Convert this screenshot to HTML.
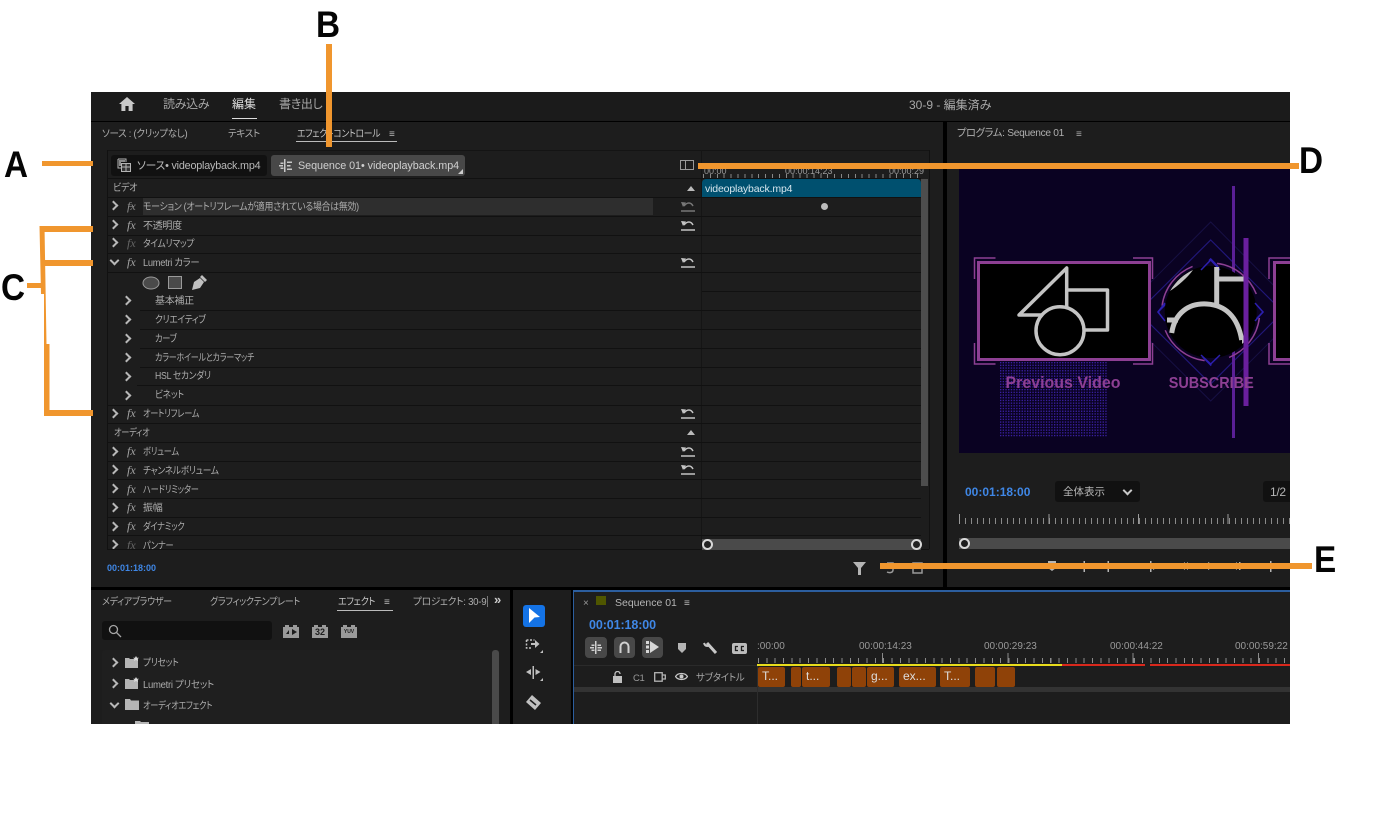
<!DOCTYPE html>
<html lang="ja"><head><meta charset="utf-8"><title>Premiere Pro</title>
<style>
html,body{margin:0;padding:0;background:#fff}
body{position:relative;width:1380px;height:815px;overflow:hidden;font-family:"Liberation Sans","Noto Sans CJK JP",sans-serif;font-feature-settings:"palt"}
div,span,svg{position:absolute}
#app{left:91px;top:92px;width:1199px;height:632px;background:#000;overflow:hidden}
#in{left:-91px;top:-92px;width:1380px;height:815px}
.p{background:#1d1d1d}
.t{white-space:nowrap;font-size:10px;line-height:18px;color:#adadad;letter-spacing:-.3px;transform-origin:0 50%;margin-top:2px}
.s8{transform:scaleX(.82)}
.s85{transform:scaleX(.87)}
.s9{transform:scaleX(.9)}
.s95{transform:scaleX(.95)}
.h{font-size:12px;color:#a8a8a8;line-height:16px;white-space:nowrap}
.l{background:#111;height:1px}
.c{width:5px;height:5px;border-right:2px solid #b8b8b8;border-top:2px solid #b8b8b8;transform:rotate(45deg)}
.d{transform:rotate(135deg)}
.fx{font:italic 12px/14px "Liberation Serif",serif;color:#a5a5a5;white-space:nowrap}
.o{background:#f0962e}
.L{font:bold 37px/40px "Liberation Sans",sans-serif;color:#050505;transform:scaleX(.9);transform-origin:0 50%}
.b{color:#3f87e6;font-weight:bold;white-space:nowrap}
.clip{top:667px;height:20px;background:#8f4208;border-radius:2px;color:#ddd;font-size:12px;line-height:19px;text-indent:4px;overflow:hidden;white-space:nowrap}
.m{font-size:10px;color:#9a9a9a;white-space:nowrap;line-height:12px}
.u{fill:none;stroke-width:1.500}
</style></head><body>
<div id="app"><div id="in">
<!-- header -->
<div class="p" style="left:91px;top:92px;width:1199px;height:29px;background:#1b1b1b"></div>
<svg style="left:119px;top:97px" width="16" height="14" viewBox="0 0 16 14"><path d="M8 0 0 7h2.400v7h4V9h3.200v5h4V7H16z" fill="#c8c8c8"/></svg>
<div class="h" style="left:163px;top:96px;letter-spacing:-.3px">読み込み</div>
<div class="h" style="left:232px;top:96px;color:#ddd">編集</div>
<div style="left:232px;top:118px;width:25px;height:1px;background:#ddd"></div>
<div class="h" style="left:279px;top:96px;letter-spacing:-.3px">書き出し</div>
<div class="h" style="left:909px;top:97px;font-size:12px">30-9 - 編集済み</div>

<!-- effect controls panel -->
<div class="p" style="left:91px;top:122px;width:852px;height:465px"></div>
<div class="t s95" style="left:102px;top:124px">ソース : (クリップなし)</div>
<div class="t s95" style="left:228px;top:124px">テキスト</div>
<div class="t" style="left:297px;top:124px;color:#c4c4c4;transform:scaleX(.88)">エフェクトコントロール</div>
<div class="t" style="left:389px;top:124px;color:#bbb">≡</div>
<div style="left:296px;top:141px;width:101px;height:1px;background:#bbb"></div>
<div style="left:107px;top:150px;width:822px;height:1px;background:#141414"></div>
<div style="left:107px;top:150px;width:1px;height:399px;background:#111"></div>
<div style="left:929px;top:150px;width:1px;height:399px;background:#111"></div>
<div style="left:107px;top:549px;width:822px;height:1px;background:#111"></div>
<div style="left:701px;top:150px;width:1px;height:399px;background:#151515"></div>

<div style="left:111px;top:155px;width:156px;height:21px;background:#111;border-radius:3px"></div>
<div style="left:271px;top:155px;width:194px;height:21px;background:#484848;border-radius:3px"></div>
<svg style="left:117px;top:158px" width="15" height="15" viewBox="0 0 15 15" fill="none" stroke="#b5b5b5"><path d="M1 1h8v3M1 1v9h3"/><rect x="4.500" y="5.500" width="9" height="8" fill="#333"/><path d="M4.500 9h9M9 5.500v8"/><path d="M2 3h6M2 5h2M2 7h2" stroke-width="1.500"/></svg>
<div class="t" style="left:137px;top:157px;margin-top:0;font-size:11px;color:#b8b8b8;letter-spacing:-.2px;transform:scaleX(.98)">ソース• videoplayback.mp4</div>
<svg style="left:279px;top:159px" width="13" height="13" viewBox="0 0 13 13" fill="#c8c8c8"><path d="M5 0h1.500v13H5zM0 6h4v1.500H0zM1.500 3.500h3V5h-3zM1.500 8.500h3V10h-3zM8 2.500h5V4H8zM8 6h3.500v1.500H8zM8 9.500h5V11H8z"/></svg>
<div class="t" style="left:298px;top:157px;margin-top:0;font-size:11px;color:#d0d0d0;letter-spacing:-.05px;transform:scaleX(.98)">Sequence 01• videoplayback.mp4</div>
<svg style="left:458px;top:169px" width="5" height="5"><path d="M5 0v5H0z" fill="#ccc"/></svg>
<svg style="left:680px;top:160px" width="14" height="10" fill="none" stroke="#9a9a9a"><rect x=".5" y=".5" width="13" height="9"/><path d="M5.500 0v10"/></svg>

<!-- row separators left -->
<div class="l" style="left:107px;top:178px;width:814px"></div>
<div class="l" style="left:107px;top:197px;width:814px"></div>
<div class="l" style="left:107px;top:216px;width:814px"></div>
<div class="l" style="left:107px;top:235px;width:814px"></div>
<div class="l" style="left:107px;top:253px;width:814px"></div>
<div class="l" style="left:107px;top:272px;width:814px"></div>
<div class="l" style="left:702px;top:291px;width:219px"></div>
<div class="l" style="left:140px;top:310px;width:781px"></div>
<div class="l" style="left:140px;top:329px;width:781px"></div>
<div class="l" style="left:140px;top:348px;width:781px"></div>
<div class="l" style="left:140px;top:367px;width:781px"></div>
<div class="l" style="left:137px;top:385px;width:784px"></div>
<div class="l" style="left:107px;top:405px;width:814px"></div>
<div class="l" style="left:107px;top:423px;width:814px"></div>
<div class="l" style="left:107px;top:442px;width:814px"></div>
<div class="l" style="left:107px;top:461px;width:814px"></div>
<div class="l" style="left:107px;top:479px;width:814px"></div>
<div class="l" style="left:107px;top:498px;width:814px"></div>
<div class="l" style="left:107px;top:517px;width:814px"></div>
<div class="l" style="left:107px;top:535px;width:814px"></div>

<div style="left:143px;top:198px;width:510px;height:17px;background:#2e2e2e"></div>

<div class="t s9" style="left:113px;top:178px">ビデオ</div>
<svg style="left:687px;top:186px" width="8" height="5"><path d="M4 0 8 5H0z" fill="#bbb"/></svg>

<div class="c" style="left:110px;top:202px"></div><div class="fx" style="left:127px;top:199px;color:#8a8a8a">f̶x</div><div class="t" style="left:143px;top:197px;transform:scaleX(.89)">モーション (オートリフレームが適用されている場合は無効)</div>
<div class="c" style="left:110px;top:221px"></div><div class="fx" style="left:127px;top:218px">fx</div><div class="t" style="left:143px;top:216px">不透明度</div>
<div class="c" style="left:110px;top:239px"></div><div class="fx" style="left:127px;top:236px;color:#666">fx</div><div class="t s85" style="left:143px;top:234px">タイムリマップ</div>
<div class="c d" style="left:111px;top:257px"></div><div class="fx" style="left:127px;top:255px">fx</div><div class="t" style="left:143px;top:253px;transform:scaleX(.93)">Lumetri カラー</div>

<svg style="left:142px;top:275px" width="66" height="16" viewBox="0 0 66 16"><ellipse cx="9" cy="8" rx="8" ry="6" fill="#4a4a4a" stroke="#9a9a9a"/><rect x="26.500" y="1.500" width="13" height="12" fill="#4a4a4a" stroke="#9a9a9a"/><path d="M50 15l2-8 6-4 4 4-4 6zM58 2l2-2 5 5-2 2z" fill="#c0c0c0"/></svg>

<div class="c" style="left:123px;top:297px"></div><div class="t" style="left:155px;top:291px">基本補正</div>
<div class="c" style="left:123px;top:316px"></div><div class="t s85" style="left:155px;top:310px">クリエイティブ</div>
<div class="c" style="left:123px;top:335px"></div><div class="t s8" style="left:155px;top:329px">カーブ</div>
<div class="c" style="left:123px;top:354px"></div><div class="t" style="left:155px;top:348px;transform:scaleX(.8)">カラーホイールとカラーマッチ</div>
<div class="c" style="left:123px;top:373px"></div><div class="t s85" style="left:155px;top:366px">HSL セカンダリ</div>
<div class="c" style="left:123px;top:392px"></div><div class="t s85" style="left:155px;top:385px">ビネット</div>
<div class="c" style="left:110px;top:410px"></div><div class="fx" style="left:127px;top:406px">fx</div><div class="t s8" style="left:143px;top:404px">オートリフレーム</div>
<div class="t s8" style="left:114px;top:423px">オーディオ</div>
<svg style="left:687px;top:430px" width="8" height="5"><path d="M4 0 8 5H0z" fill="#bbb"/></svg>
<div class="c" style="left:110px;top:448px"></div><div class="fx" style="left:127px;top:444px">fx</div><div class="t s8" style="left:143px;top:442px">ボリューム</div>
<div class="c" style="left:110px;top:466px"></div><div class="fx" style="left:127px;top:463px">fx</div><div class="t s85" style="left:143px;top:461px">チャンネルボリューム</div>
<div class="c" style="left:110px;top:485px"></div><div class="fx" style="left:127px;top:482px">fx</div><div class="t s8" style="left:143px;top:480px">ハードリミッター</div>
<div class="c" style="left:110px;top:504px"></div><div class="fx" style="left:127px;top:500px">fx</div><div class="t" style="left:143px;top:498px">振幅</div>
<div class="c" style="left:110px;top:523px"></div><div class="fx" style="left:127px;top:519px">fx</div><div class="t s8" style="left:143px;top:517px">ダイナミック</div>
<div class="c" style="left:110px;top:541px"></div><div class="fx" style="left:127px;top:538px;color:#666">fx</div><div class="t s8" style="left:143px;top:536px">パンナー</div>
<div style="left:107px;top:550px;width:594px;height:36px;background:#1d1d1d"></div>
<div style="left:107px;top:549px;width:822px;height:1px;background:#111"></div>

<!-- undo icons -->
<svg style="left:681px;top:200px" width="14" height="12" stroke="#777"><path class="u" d="M3 6c3-4 7-4 9 0"/><path d="M0 2l5 .5L2 7z" fill="#777" stroke="none"/><path class="u" d="M0 11h14"/></svg>
<svg style="left:681px;top:219px" width="14" height="12" stroke="#c4c4c4"><path class="u" d="M3 6c3-4 7-4 9 0"/><path d="M0 2l5 .5L2 7z" fill="#c4c4c4" stroke="none"/><path class="u" d="M0 11h14"/></svg>
<svg style="left:681px;top:256px" width="14" height="12" stroke="#c4c4c4"><path class="u" d="M3 6c3-4 7-4 9 0"/><path d="M0 2l5 .5L2 7z" fill="#c4c4c4" stroke="none"/><path class="u" d="M0 11h14"/></svg>
<svg style="left:681px;top:407px" width="14" height="12" stroke="#c4c4c4"><path class="u" d="M3 6c3-4 7-4 9 0"/><path d="M0 2l5 .5L2 7z" fill="#c4c4c4" stroke="none"/><path class="u" d="M0 11h14"/></svg>
<svg style="left:681px;top:445px" width="14" height="12" stroke="#c4c4c4"><path class="u" d="M3 6c3-4 7-4 9 0"/><path d="M0 2l5 .5L2 7z" fill="#c4c4c4" stroke="none"/><path class="u" d="M0 11h14"/></svg>
<svg style="left:681px;top:463px" width="14" height="12" stroke="#c4c4c4"><path class="u" d="M3 6c3-4 7-4 9 0"/><path d="M0 2l5 .5L2 7z" fill="#c4c4c4" stroke="none"/><path class="u" d="M0 11h14"/></svg>

<!-- mini timeline -->
<div class="m" style="left:704px;top:165px;font-size:9px">00:00</div>
<div class="m" style="left:785px;top:165px;font-size:9px">00:00:14:23</div>
<div class="m" style="left:889px;top:165px;font-size:9px">00:00:29</div>
<div style="left:703px;top:174px;width:218px;height:4px;background:repeating-linear-gradient(90deg,#888 0 1px,transparent 1px 6.900px)"></div>
<div style="left:702px;top:179px;width:219px;height:18px;background:#00506f;border-radius:4px 4px 0 0"></div>
<div class="t" style="left:705px;top:180px;margin-top:0;font-size:10.500px;color:#d6e6ee;letter-spacing:-.15px">videoplayback.mp4</div>
<div style="left:821px;top:203px;width:7px;height:7px;border-radius:50%;background:#bcbcbc"></div>
<div style="left:921px;top:179px;width:7px;height:307px;background:#4d4d4d"></div>
<div style="left:702px;top:539px;width:219px;height:11px;background:#4a4a4a"></div>
<div style="left:702px;top:539px;width:7px;height:7px;border-radius:50%;border:2px solid #d8d8d8;background:#222"></div>
<div style="left:911px;top:539px;width:7px;height:7px;border-radius:50%;border:2px solid #d8d8d8;background:#222"></div>
<div class="b" style="left:107px;top:562px;font-size:9px;line-height:12px">00:01:18:00</div>
<svg style="left:853px;top:562px" width="13" height="13"><path d="M0 0h13L8 6v7H5V6z" fill="#b5b5b5"/></svg>
<svg style="left:880px;top:560px" width="46" height="15" fill="none" stroke="#9a9a9a" stroke-width="1.500"><path d="M7 3h6v7c0 3-4 3-6 2"/><rect x="33" y="3" width="9" height="10"/></svg>

<!-- program panel -->
<div class="p" style="left:947px;top:122px;width:343px;height:465px"></div>
<div class="t" style="left:957px;top:123px;margin-top:1px;color:#b0b0b0;font-size:10.500px;transform:scaleX(.97)">プログラム: Sequence 01</div>
<div class="t" style="left:1076px;top:124px">≡</div>
<svg style="left:959px;top:163px" width="331" height="290" viewBox="959 163 331 290">
<defs><pattern id="dots" x="1000" y="362" width="2.700" height="2.700" patternUnits="userSpaceOnUse"><rect width="1.300" height="1.300" fill="#3b20a8"/></pattern></defs>
<rect x="959" y="163" width="331" height="290" fill="#0a0222"/>
<rect x="1000" y="362" width="107" height="75" fill="url(#dots)"/>
<g fill="none">
<path d="M1210.700 222 1300 312 1210.700 401 1121 312z" stroke="#171044" stroke-width="1"/>
<path d="M1210.700 240 1283 312 1210.700 384 1138 312z" stroke="#211778" stroke-width="1.200"/>
<path d="M1210.700 259 1263 312 1210.700 365 1158 312z" stroke="#2c1fb0" stroke-width="1.500" stroke-dasharray="14 60"/>
</g>
<rect x="1232" y="186" width="3" height="87" fill="#5a1f96"/>
<rect x="1232" y="350" width="3" height="88" fill="#5a1f96"/>
<rect x="978.500" y="262.500" width="171" height="97" fill="#000" stroke="#8d3f93" stroke-width="3"/>
<path d="M974.500 279v-21h21M1133 258h19.500v21M974.500 343v21h21M1133 364h19.500v-21" fill="none" stroke="#8d3f93" stroke-width="1.500"/>
<g fill="none" stroke="#c4c4c4" stroke-width="3.500" stroke-linejoin="round">
<path d="M1066.700 268v47h-47.700z"/>
<path d="M1068 290h39.500v40h-24.500"/>
<circle cx="1060" cy="330.700" r="24" fill="#000"/>
</g>
<circle cx="1210.700" cy="312" r="46" fill="#000"/>
<circle cx="1210.700" cy="312" r="49" fill="none" stroke="#8d3f93" stroke-width="1.500" stroke-dasharray="52 25" stroke-dashoffset="-6"/>
<path d="M1210.700 260 1220 270M1210.700 260 1201 270M1263 312 1255 303M1263 312 1255 321M1158 312 1165 303M1158 312 1165 321M1210.700 364 1201 355M1210.700 364 1220 355" stroke="#2c1fb0" stroke-width="1.500" fill="none"/>
<g fill="none" stroke="#c4c4c4" stroke-width="5">
<path d="M1216.700 267v38M1216.700 279h28"/>
<path d="M1171.700 333c3-20 17-30 35-29s31 12 35 36"/>
<path d="M1167 320h11"/>
</g>
<path d="M1170 291c6-10 14-17 23-21-6 8-14 15-23 21z" fill="#c4c4c4"/>
<path d="M1242 337l6 1-6 6z" fill="#c4c4c4"/>
<rect x="1243.500" y="238" width="5" height="168" fill="#6a1f9e"/>
<rect x="1274.500" y="262.500" width="20" height="97" fill="#000" stroke="#8d3f93" stroke-width="3"/>
<path d="M1269 279v-21h21M1269 343v21h21" fill="none" stroke="#8d3f93" stroke-width="1.500"/>
<text x="1005.500" y="388" font-family="Liberation Sans" font-weight="bold" font-size="16.500" fill="#8d3f93" textLength="115" lengthAdjust="spacingAndGlyphs">Previous Video</text>
<text x="1168.700" y="388" font-family="Liberation Sans" font-weight="bold" font-size="16" fill="#8d3f93" textLength="85" lengthAdjust="spacingAndGlyphs">SUBSCRIBE</text>
</svg>
<div class="b" style="left:965px;top:485px;font-size:12px;line-height:14px">00:01:18:00</div>
<div style="left:1055px;top:481px;width:85px;height:21px;background:#111;border-radius:3px"></div>
<div class="t" style="left:1063px;top:483px;margin-top:0;font-size:10.500px;color:#b5b5b5;letter-spacing:0">全体表示</div>
<div class="c d" style="left:1124px;top:487px;border-color:#c8c8c8"></div>
<div style="left:1263px;top:481px;width:27px;height:21px;background:#111;border-radius:3px 0 0 3px"></div>
<div class="t" style="left:1270px;top:483px;margin-top:0;font-size:12px;color:#b5b5b5">1/2</div>
<div style="left:959px;top:518px;width:331px;height:6px;background:repeating-linear-gradient(90deg,#8a8a8a 0 1px,transparent 1px 6px)"></div>
<div style="left:959px;top:514px;width:331px;height:10px;background:repeating-linear-gradient(90deg,#9a9a9a 0 1px,transparent 1px 89.500px)"></div>
<div style="left:959px;top:538px;width:331px;height:11px;background:#4a4a4a"></div>
<div style="left:959px;top:538px;width:7px;height:7px;border-radius:50%;border:2px solid #d8d8d8;background:#1d1d1d"></div>
<svg style="left:1045px;top:560px" width="240" height="13" fill="#b5b5b5"><path d="M3 1h8v7l-4 3-4-3zM38.500 1h1.500v11h-1.500zM62.500 1h1.500v11h-1.500zM105 1h1.500v11H105zM108 4l5 3-5 3zM140 2l-5 4 5 4zM143 2l-5 4 5 4zM163 2l7 4-7 4zM192 2l-5 4 5 4zM194 2h1.500v8H194zM225 1h1.500v11H225zM222 3l-4 3 4 3zM229 3l4 3-4 3z"/></svg>

<!-- bottom left panel -->
<div class="p" style="left:91px;top:590px;width:419px;height:134px"></div>
<div class="t s9" style="left:102px;top:592px">メディアブラウザー</div>
<div class="t s9" style="left:210px;top:592px">グラフィックテンプレート</div>
<div class="t s9" style="left:338px;top:592px;color:#c8c8c8">エフェクト</div>
<div class="t" style="left:384px;top:592px;color:#bbb">≡</div>
<div style="left:337px;top:610px;width:56px;height:1px;background:#bbb"></div>
<div class="t" style="left:413px;top:592px;transform:scaleX(.97)">プロジェクト: 30-9</div>
<div style="left:487px;top:596px;width:1px;height:11px;background:#777"></div>
<div class="t" style="left:494px;top:591px;margin-top:0;color:#ccc;font-size:13px;font-weight:bold">»</div>
<div style="left:102px;top:621px;width:170px;height:19px;background:#111;border-radius:3px"></div>
<svg style="left:108px;top:624px" width="14" height="14" fill="none" stroke="#a5a5a5" stroke-width="1.300"><circle cx="5.500" cy="5.500" r="4"/><path d="M8.500 8.500 13 13"/></svg>
<svg style="left:283px;top:625px" width="16" height="13"><path d="M0 2h2V0h4v2h4V0h4v2h2v11H0z" fill="#9a9a9a"/><path d="M3 9l3-4v4zM9 4l5 3-5 3z" fill="#1d1d1d"/></svg>
<svg style="left:312px;top:625px" width="16" height="13"><path d="M0 2h2V0h4v2h4V0h4v2h2v11H0z" fill="#9a9a9a"/></svg>
<div style="left:312px;top:627px;width:16px;text-align:center;font:bold 9px/11px 'Liberation Sans',sans-serif;color:#1d1d1d">32</div>
<svg style="left:341px;top:625px" width="16" height="13"><path d="M0 2h2V0h4v2h4V0h4v2h2v11H0z" fill="#9a9a9a"/></svg>
<div style="left:341px;top:628px;width:16px;text-align:center;font:bold 5px/9px 'Liberation Sans',sans-serif;color:#1d1d1d">YUV</div>
<div style="left:102px;top:650px;width:398px;height:74px;background:#1f1f1f;border-radius:3px 3px 0 0"></div>
<div style="left:492px;top:650px;width:7px;height:74px;background:#4a4a4a;border-radius:3px 3px 0 0"></div>
<div class="c" style="left:110px;top:659px"></div>
<svg style="left:125px;top:656px" width="14" height="12"><path d="M0 2h4l1 1h3v9H0z" fill="#b5b5b5"/><path d="M8 3h5v9H8z" fill="#b5b5b5"/><path d="M11 0l1 1.700h2L12.500 3l.5 2-2-1-2 1 .5-2L8 1.700h2z" fill="#ddd"/></svg>
<div class="t s85" style="left:143px;top:653px">プリセット</div>
<div class="c" style="left:110px;top:680px"></div>
<svg style="left:125px;top:677px" width="14" height="12"><path d="M0 2h4l1 1h3v9H0z" fill="#b5b5b5"/><path d="M8 3h5v9H8z" fill="#b5b5b5"/><path d="M11 0l1 1.700h2L12.500 3l.5 2-2-1-2 1 .5-2L8 1.700h2z" fill="#ddd"/></svg>
<div class="t s95" style="left:143px;top:675px">Lumetri プリセット</div>
<div class="c d" style="left:111px;top:700px"></div>
<svg style="left:125px;top:699px" width="14" height="11"><path d="M0 0h5l1 1.500h8V11H0z" fill="#b5b5b5"/></svg>
<div class="t s8" style="left:143px;top:696px">オーディオエフェクト</div>
<svg style="left:135px;top:721px" width="14" height="4"><path d="M0 0h5l1 1h8v3H0z" fill="#b5b5b5"/></svg>

<!-- tools -->
<div class="p" style="left:513px;top:590px;width:58px;height:134px"></div>
<div style="left:523px;top:605px;width:22px;height:22px;background:#1473e6;border-radius:3px"></div>
<svg style="left:528px;top:608px" width="13" height="16"><path d="M1 0 12 9 6.500 9.500 1 15z" fill="#fff"/></svg>
<svg style="left:525px;top:638px" width="18" height="15" fill="none" stroke="#c0c0c0"><path d="M1.500 2h8M1.500 2v8h6" stroke-dasharray="2 1.500" stroke-width="1.500"/><path d="M6 6h5" stroke-width="2"/><path d="M10 2l4.500 4-4.500 4z" fill="#c0c0c0" stroke="none"/><path d="M18 12v3h-3z" fill="#c0c0c0" stroke="none"/></svg>
<svg style="left:525px;top:666px" width="18" height="15" fill="#c0c0c0"><path d="M7.500 0h1.500v13H7.500zM6 3v6L1 6zM10.500 3v6l5-3z"/><path d="M18 12v3h-3z"/></svg>
<svg style="left:526px;top:695px" width="15" height="15"><path d="M6 0l9 8-6 7-9-8z" fill="#c0c0c0"/><path d="M4 5l6 5" stroke="#1d1d1d" stroke-width="1.500"/></svg>

<!-- timeline -->
<div class="p" style="left:573px;top:590px;width:717px;height:134px"></div>
<div style="left:573px;top:590px;width:717px;height:2px;background:#2c5e9e"></div>
<div style="left:573px;top:590px;width:1px;height:134px;background:#2c5e9e"></div>
<div class="t" style="left:583px;top:593px;color:#999">×</div>
<div style="left:596px;top:596px;width:10px;height:9px;background:#4f5600"></div>
<div class="t" style="left:615px;top:593px;margin-top:1px;font-size:10.500px;color:#b5b5b5;letter-spacing:0">Sequence 01</div>
<div class="t" style="left:684px;top:593px;color:#bbb">≡</div>
<div class="b" style="left:589px;top:618px;font-size:12.500px;line-height:14px;letter-spacing:-.1px">00:01:18:00</div>
<div style="left:585px;top:637px;width:22px;height:21px;background:#484848;border-radius:4px"></div>
<div style="left:614px;top:637px;width:21px;height:21px;background:#484848;border-radius:4px"></div>
<div style="left:642px;top:637px;width:21px;height:21px;background:#484848;border-radius:4px"></div>
<svg style="left:590px;top:641px" width="12" height="13" fill="#d0d0d0"><path d="M5 0h1.500v13H5zM0 6h4v1.500H0zM1.500 3.500h3V5h-3zM1.500 8.500h3V10h-3zM7.500 3.500H11V5H7.500zM7.500 6h4.500v1.500H7.500zM7.500 8.500H11V10H7.500z"/></svg>
<svg style="left:619px;top:641px" width="11" height="12" fill="none" stroke="#d0d0d0" stroke-width="2"><path d="M1.500 12V5.500a4 4 0 0 1 8 0V12"/></svg>
<svg style="left:646px;top:640px" width="14" height="14" fill="#d8d8d8"><path d="M4 1l9 6-9 6z"/><path d="M0 1h3v3H0zM0 5.500h3v3H0zM0 10h3v3H0z"/></svg>
<svg style="left:678px;top:643px" width="8" height="10"><path d="M0 0h8v6L4 10 0 6z" fill="#b5b5b5"/></svg>
<svg style="left:703px;top:640px" width="14" height="15" fill="none" stroke="#c8c8c8" stroke-width="3"><path d="M4 3l9 10"/><path d="M1 3c1 3 3 4 6 2" stroke-width="2"/></svg>
<svg style="left:732px;top:643px" width="15" height="11"><rect width="15" height="11" rx="2" fill="#bbb"/><path d="M6 3.500H3.500v4H6M12 3.500H9.500v4H12" stroke="#1d1d1d" stroke-width="1.300" fill="none"/></svg>
<div class="m" style="left:757px;top:641px">:00:00</div>
<div class="m" style="left:859px;top:641px">00:00:14:23</div>
<div class="m" style="left:984px;top:641px">00:00:29:23</div>
<div class="m" style="left:1110px;top:641px">00:00:44:22</div>
<div class="m" style="left:1235px;top:641px">00:00:59:22</div>
<div style="left:758px;top:658px;width:532px;height:5px;background:repeating-linear-gradient(90deg,#8a8a8a 0 1px,transparent 1px 8.350px)"></div>
<div style="left:882px;top:653px;width:408px;height:10px;background:repeating-linear-gradient(90deg,#8a8a8a 0 1px,transparent 1px 125.300px)"></div>
<div style="left:757px;top:664px;width:305px;height:2px;background:#e8dc1c"></div>
<div style="left:1062px;top:664px;width:83px;height:2px;background:#d8281c"></div>
<div style="left:1150px;top:664px;width:140px;height:2px;background:#d8281c"></div>
<div style="left:574px;top:665px;width:183px;height:1px;background:#2a2a2a"></div>
<div style="left:574px;top:687px;width:716px;height:5px;background:#333"></div>
<div style="left:757px;top:666px;width:1px;height:58px;background:#2d2d2d"></div>
<svg style="left:612px;top:671px" width="11" height="12" fill="#c0c0c0"><path d="M1 5h9v7H1z"/><path d="M3 5V3a2.500 2.500 0 0 1 5 0" fill="none" stroke="#c0c0c0" stroke-width="1.300"/></svg>
<div class="t" style="left:633px;top:668px;color:#999;font-size:9.500px">C1</div>
<svg style="left:654px;top:672px" width="12" height="10" fill="none" stroke="#b5b5b5" stroke-width="1.300"><rect x=".7" y=".7" width="7.500" height="8.500"/><path d="M8 3h3.300v4H8"/></svg>
<svg style="left:675px;top:672px" width="13" height="9"><path d="M.5 4.500C3 .5 10 .5 12.500 4.500 10 8.500 3 8.500 .5 4.500z" fill="none" stroke="#c8c8c8" stroke-width="1.300"/><circle cx="6.500" cy="4.500" r="2" fill="#c8c8c8"/></svg>
<div class="t s95" style="left:696px;top:668px;color:#a5a5a5">サブタイトル</div>
<div class="clip" style="left:758px;width:27px">T...</div>
<div class="clip" style="left:791px;width:10px"></div>
<div class="clip" style="left:802px;width:28px">t...</div>
<div class="clip" style="left:837px;width:14px"></div>
<div class="clip" style="left:852px;width:14px"></div>
<div class="clip" style="left:867px;width:27px">g...</div>
<div class="clip" style="left:899px;width:37px">ex...</div>
<div class="clip" style="left:940px;width:30px">T...</div>
<div class="clip" style="left:975px;width:20px"></div>
<div class="clip" style="left:997px;width:18px"></div>
</div></div>

<!-- annotations -->
<div class="o" style="left:42px;top:161px;width:51px;height:5px"></div>
<div class="o" style="left:325.500px;top:44px;width:6px;height:103px"></div>
<div class="o" style="left:698px;top:163px;width:601px;height:6px"></div>
<div class="o" style="left:880px;top:563px;width:432px;height:6px"></div>
<div class="o" style="left:43px;top:226px;width:50px;height:6px"></div>
<div class="o" style="left:45px;top:260px;width:48px;height:6px"></div>
<div class="o" style="left:44px;top:410px;width:49px;height:6px"></div>
<div class="o" style="left:27px;top:283px;width:15px;height:5px"></div>
<svg style="left:38px;top:226px" width="12" height="191"><path d="M1.500 0h5l2 118h3V190h-5.500V68H3z" fill="#f0962e"/></svg>
<div class="L" style="left:4px;top:145px">A</div>
<div class="L" style="left:316px;top:5px">B</div>
<div class="L" style="left:1px;top:268px">C</div>
<div class="L" style="left:1299px;top:141px">D</div>
<div class="L" style="left:1314px;top:540px">E</div>
</body></html>
